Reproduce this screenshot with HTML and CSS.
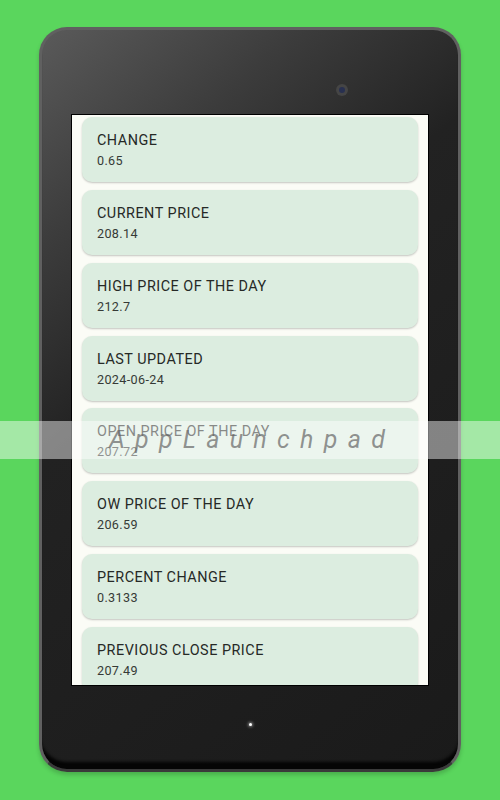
FILE: index.html
```html
<!DOCTYPE html>
<html>
<head>
<meta charset="utf-8">
<link rel="stylesheet" href="styles.css">
</head>
<body>
<div class="page">
  <div class="tablet">
    <div class="camera"><div class="lens"></div></div>
    <div class="screen">
      <div class="list">
        <div class="card"><div class="title">CHANGE</div><div class="value">0.65</div></div>
        <div class="card"><div class="title">CURRENT PRICE</div><div class="value">208.14</div></div>
        <div class="card"><div class="title">HIGH PRICE OF THE DAY</div><div class="value">212.7</div></div>
        <div class="card"><div class="title">LAST UPDATED</div><div class="value">2024-06-24</div></div>
        <div class="card"><div class="title">OPEN PRICE OF THE DAY</div><div class="value">207.72</div></div>
        <div class="card"><div class="title">OW PRICE OF THE DAY</div><div class="value">206.59</div></div>
        <div class="card"><div class="title">PERCENT CHANGE</div><div class="value">0.3133</div></div>
        <div class="card"><div class="title">PREVIOUS CLOSE PRICE</div><div class="value">207.49</div></div>
      </div>
    </div>
    <div class="home"></div>
  </div>
  <div class="watermark">AppLaunchpad</div>
</div>
</body>
</html>
```

FILE: styles.css
```css
html, body {
  margin: 0;
  padding: 0;
}
body {
  background: #5ad65d;
  font-family: Roboto, "Liberation Sans", sans-serif;
}
.page {
  position: relative;
  width: 500px;
  height: 800px;
  padding-top: 27px;
  box-sizing: border-box;
  overflow: hidden;
}
.tablet {
  position: relative;
  width: 422px;
  height: 745px;
  margin: 0 auto;
  box-sizing: border-box;
  border: 3px solid #606060;
  border-bottom-color: #3a3a3a;
  border-radius: 28px;
  background: linear-gradient(140deg, #5a5a5a 0%, #3c3c3c 20%, #222 40%, #1a1a1a 100%);
  box-shadow: inset 0 -9px 3px -2px #050505, 0 3px 4px rgba(0,0,0,0.18);
  padding-top: 84px;
  display: flex;
  flex-direction: column;
  align-items: center;
}
.camera {
  position: absolute;
  left: 294px;
  top: 54px;
  width: 12px;
  height: 12px;
  border-radius: 50%;
  background: #454545;
  display: flex;
  align-items: center;
  justify-content: center;
}
.lens {
  width: 6px;
  height: 6px;
  border-radius: 50%;
  background: #283050;
}
.screen {
  width: 358px;
  height: 572px;
  box-sizing: border-box;
  border: 1px solid #000;
  background: #fbfcf6;
  padding: 2px 10px 0 10px;
  overflow: hidden;
}
.list {
  display: flex;
  flex-direction: column;
  gap: 7.86px;
}
.card {
  flex: none;
  height: 65px;
  box-sizing: border-box;
  background: #dcede0;
  border-radius: 10px;
  padding: 15px 15px 0 15px;
  box-shadow: 0 1px 2px rgba(0,0,0,0.22);
}
.title {
  font-size: 14.4px;
  line-height: 17px;
  color: #262926;
  letter-spacing: 0.5px;
}
.value {
  margin-top: 4px;
  font-size: 12.6px;
  line-height: 16px;
  color: #363a36;
  letter-spacing: 0.35px;
}
.home {
  margin-top: 37px;
  width: 3px;
  height: 3px;
  border-radius: 50%;
  background: #fff;
  box-shadow: 0 0 3px 1px rgba(255,255,255,0.45);
}
.watermark {
  position: absolute;
  left: 0;
  top: 421px;
  width: 500px;
  height: 38px;
  background: rgba(255,255,255,0.45);
  color: rgba(100,100,100,0.7);
  font-style: italic;
  font-size: 25px;
  line-height: 38px;
  letter-spacing: 10.3px;
  text-align: center;
  text-indent: 4px;
}
```
